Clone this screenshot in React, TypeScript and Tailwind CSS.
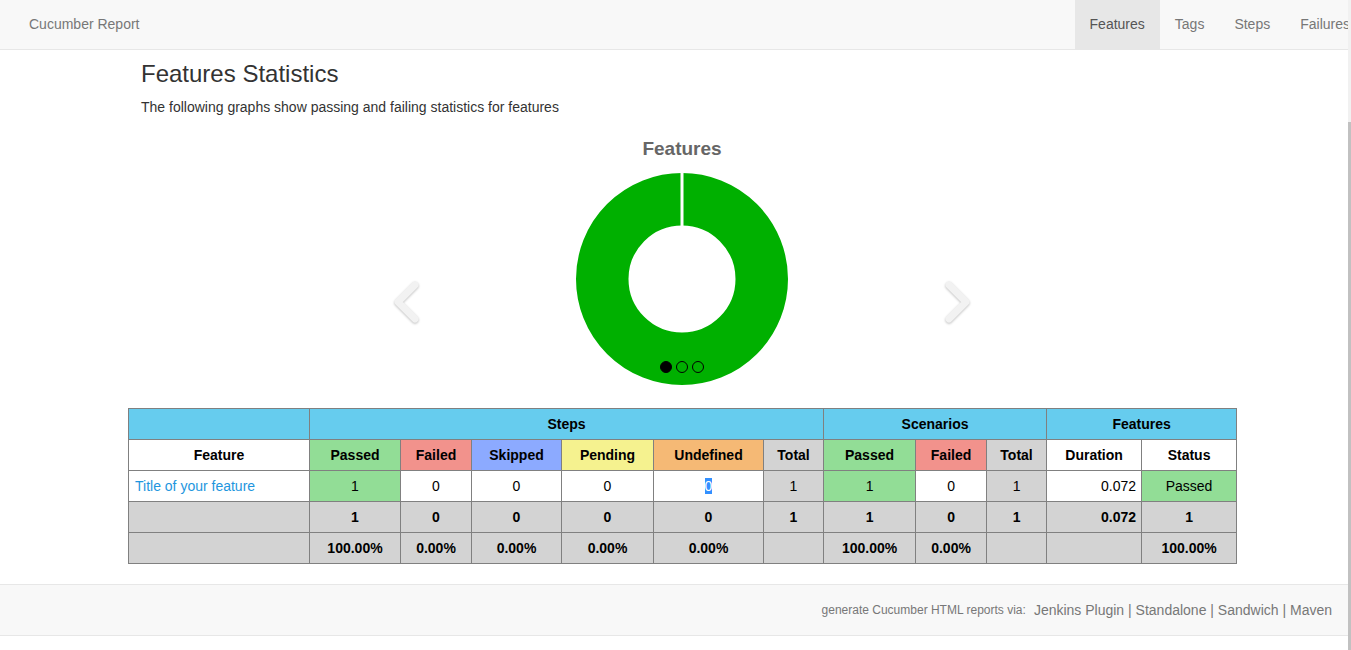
import React from 'react';

const font = { fontFamily: '"Liberation Sans", Arial, sans-serif' };

const cell = 'border border-[#808080] h-[31px] p-0 text-center';

const Chevron = ({ dir }: { dir: 'left' | 'right' }) => (
  <svg width="30" height="42" viewBox="0 0 30 42" className="drop-shadow-[0_1px_1px_rgba(0,0,0,0.25)]">
    <polyline
      points={dir === 'left' ? '24,4 7,21 24,38' : '6,4 23,21 6,38'}
      fill="none"
      stroke="#f2f2f2"
      strokeWidth="7"
      strokeLinecap="round"
      strokeLinejoin="round"
    />
  </svg>
);

const Donut = () => (
  <svg width="212" height="212" viewBox="0 0 212 212">
    <circle cx="106" cy="106" r="79.75" fill="none" stroke="#00b000" strokeWidth="52.5" />
    <rect x="104.5" y="0" width="3" height="54" fill="#ffffff" />
  </svg>
);

const Navbar = () => (
  <nav className="h-[50px] bg-[#f8f8f8] border-b border-[#e7e7e7] overflow-hidden">
    <div className="w-[1365px] h-[49px] flex items-center justify-between">
      <a href="#" className="pl-[29px] text-[14px] text-[#777]">Cucumber Report</a>
      <ul className="flex h-full text-[14px] text-[#777]">
        <li className="h-full px-[15px] flex items-center bg-[#e7e7e7] text-[#555]">Features</li>
        <li className="h-full px-[15px] flex items-center">Tags</li>
        <li className="h-full px-[15px] flex items-center">Steps</li>
        <li className="h-full px-[15px] flex items-center">Failures</li>
      </ul>
    </div>
  </nav>
);

const StatsTable = () => (
  <table className="w-[1108px] border-collapse table-fixed text-[14px] text-black">
    <colgroup>
      {[181, 91, 71, 90, 92, 110, 60, 92, 71, 60, 95, 95].map((w, i) => (
        <col key={i} style={{ width: w }} />
      ))}
    </colgroup>
    <thead>
      <tr className="bg-[#66ccee] font-bold">
        <th className={cell}></th>
        <th className={cell} colSpan={6}>Steps</th>
        <th className={cell} colSpan={3}>Scenarios</th>
        <th className={cell} colSpan={2}>Features</th>
      </tr>
      <tr className="font-bold">
        <th className={`${cell} bg-white`}>Feature</th>
        <th className={`${cell} bg-[#92dd96]`}>Passed</th>
        <th className={`${cell} bg-[#f2928c]`}>Failed</th>
        <th className={`${cell} bg-[#8caaff]`}>Skipped</th>
        <th className={`${cell} bg-[#f5f28f]`}>Pending</th>
        <th className={`${cell} bg-[#f5b975]`}>Undefined</th>
        <th className={`${cell} bg-[#d3d3d3]`}>Total</th>
        <th className={`${cell} bg-[#92dd96]`}>Passed</th>
        <th className={`${cell} bg-[#f2928c]`}>Failed</th>
        <th className={`${cell} bg-[#d3d3d3]`}>Total</th>
        <th className={`${cell} bg-white`}>Duration</th>
        <th className={`${cell} bg-white`}>Status</th>
      </tr>
    </thead>
    <tbody>
      <tr>
        <td className={`${cell} text-left pl-[6px]`}>
          <a href="#" className="text-[#1e96de]">Title of your feature</a>
        </td>
        <td className={`${cell} bg-[#92dd96]`}>1</td>
        <td className={cell}>0</td>
        <td className={cell}>0</td>
        <td className={cell}>0</td>
        <td className={cell}>
          <span className="bg-[#3390ff] text-white">0</span>
        </td>
        <td className={`${cell} bg-[#d3d3d3]`}>1</td>
        <td className={`${cell} bg-[#92dd96]`}>1</td>
        <td className={cell}>0</td>
        <td className={`${cell} bg-[#d3d3d3]`}>1</td>
        <td className={`${cell} text-right pr-[5px]`}>0.072</td>
        <td className={`${cell} bg-[#92dd96]`}>Passed</td>
      </tr>
      <tr className="bg-[#d3d3d3] font-bold">
        <td className={cell}></td>
        <td className={cell}>1</td>
        <td className={cell}>0</td>
        <td className={cell}>0</td>
        <td className={cell}>0</td>
        <td className={cell}>0</td>
        <td className={cell}>1</td>
        <td className={cell}>1</td>
        <td className={cell}>0</td>
        <td className={cell}>1</td>
        <td className={`${cell} text-right pr-[5px]`}>0.072</td>
        <td className={cell}>1</td>
      </tr>
      <tr className="bg-[#d3d3d3] font-bold">
        <td className={cell}></td>
        <td className={cell}>100.00%</td>
        <td className={cell}>0.00%</td>
        <td className={cell}>0.00%</td>
        <td className={cell}>0.00%</td>
        <td className={cell}>0.00%</td>
        <td className={cell}></td>
        <td className={cell}>100.00%</td>
        <td className={cell}>0.00%</td>
        <td className={cell}></td>
        <td className={cell}></td>
        <td className={cell}>100.00%</td>
      </tr>
    </tbody>
  </table>
);

const Footer = () => (
  <footer className="mt-[20px] h-[52px] bg-[#f8f8f8] border-y border-[#e7e7e7] flex items-center justify-end pr-[16px] text-[#777]">
    <span className="text-[12px] mr-[8px]">generate Cucumber HTML reports via:</span>
    <span className="text-[14px]">
      <a href="#">Jenkins Plugin</a> | <a href="#">Standalone</a> | <a href="#">Sandwich</a> | <a href="#">Maven</a>
    </span>
  </footer>
);

export default function App() {
  return (
    <div className="flex h-[650px] overflow-hidden bg-white" style={font}>
      <div className="flex-1 min-w-0 overflow-hidden">
        <Navbar />
        <div className="pl-[128px]">
          <h1 className="pl-[13px] mt-[11px] text-[24px] leading-[26px] text-[#333]">Features Statistics</h1>
          <p className="pl-[13px] mt-[10px] text-[14px] leading-[20px] text-[#333]">
            The following graphs show passing and failing statistics for features
          </p>
          <div className="relative w-[1108px] h-[291px] pt-[20px]">
            <h2 className="text-center text-[19px] leading-[24px] font-bold text-[#666]">Features</h2>
            <div className="mt-[12px] flex justify-center">
              <Donut />
            </div>
            <div className="absolute left-[263px] top-[164px]">
              <Chevron dir="left" />
            </div>
            <div className="absolute left-[815px] top-[164px]">
              <Chevron dir="right" />
            </div>
            <div className="absolute top-[244px] left-0 right-0 flex justify-center gap-[4px]">
              <span className="w-[12px] h-[12px] rounded-full bg-black border border-black" />
              <span className="w-[12px] h-[12px] rounded-full border border-black" />
              <span className="w-[12px] h-[12px] rounded-full border border-black" />
            </div>
          </div>
          <StatsTable />
        </div>
        <Footer />
      </div>
      <div className="w-[3px] flex flex-col">
        <div className="h-[122px] bg-[#f1f1f1]" />
        <div className="flex-1 bg-[#c1c1c1]" />
      </div>
    </div>
  );
}
